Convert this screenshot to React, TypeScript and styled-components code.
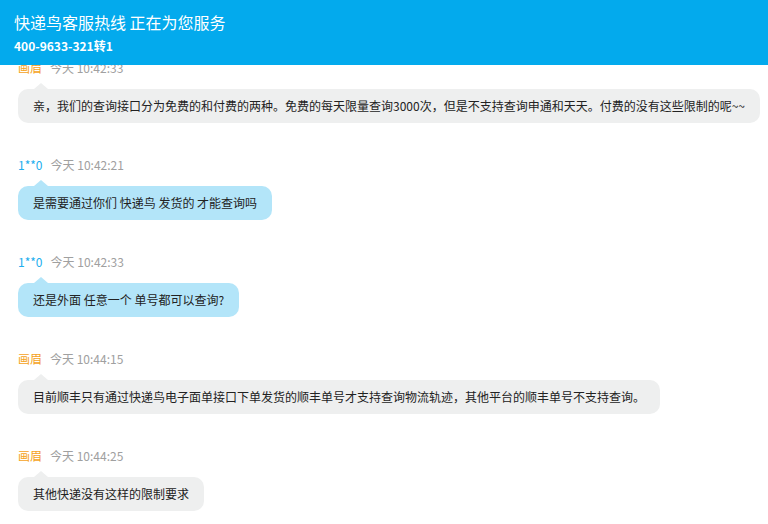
import styled, { createGlobalStyle } from "styled-components";

const GlobalStyle = createGlobalStyle`
  html, body {
    margin: 0;
    padding: 0;
    background: #fff;
    font-family: "Microsoft YaHei", "Noto Sans CJK SC", "Liberation Sans", sans-serif;
  }
`;

/**
 * top hotline bar, stays over the chat list
 */
const Header = styled.div`
  position: fixed;
  top: 0;
  left: 0;
  right: 0;
  height: 65px;
  box-sizing: border-box;
  padding: 10px 14px 0;
  background: #03aaed;
  color: #fff;
  z-index: 10;
`;

const HeaderTitle = styled.div`
  font-size: 16px;
  line-height: 24px;
`;

const HeaderPhone = styled.div`
  margin-top: 1px;
  font-size: 12px;
  font-weight: bold;
  line-height: 22px;
`;

const ChatList = styled.div`
  padding: 57px 0 0 18px;
`;

const Message = styled.div`
  margin-bottom: 31px;
`;

const Meta = styled.div`
  display: flex;
  gap: 8px;
  height: 20px;
  align-items: center;
  font-size: 12px;
`;

const Name = styled.span<{ $staff: boolean }>`
  color: ${(p) => (p.$staff ? "#f5a21b" : "#21aeee")};
`;

const Time = styled.span`
  color: #a0a0a0;
`;

const Bubble = styled.div<{ $staff: boolean }>`
  position: relative;
  display: inline-block;
  margin-top: 12px;
  padding: 9px 15px;
  border-radius: 10px;
  font-size: 12px;
  line-height: 16px;
  color: #222;
  background: ${(p) => (p.$staff ? "#eeefef" : "#b3e5f9")};
  &::before {
    content: "";
    position: absolute;
    top: -6px;
    left: 16px;
    border-left: 7px solid transparent;
    border-right: 7px solid transparent;
    border-bottom: 6px solid ${(p) => (p.$staff ? "#eeefef" : "#b3e5f9")};
  }
`;

type Msg = { name: string; staff: boolean; time: string; text: string };

const messages: Msg[] = [
  {
    name: "画眉",
    staff: true,
    time: "今天 10:42:33",
    text: "亲，我们的查询接口分为免费的和付费的两种。免费的每天限量查询3000次，但是不支持查询申通和天天。付费的没有这些限制的呢~~",
  },
  { name: "1**0", staff: false, time: "今天 10:42:21", text: "是需要通过你们 快递鸟 发货的 才能查询吗" },
  { name: "1**0", staff: false, time: "今天 10:42:33", text: "还是外面 任意一个 单号都可以查询?" },
  {
    name: "画眉",
    staff: true,
    time: "今天 10:44:15",
    text: "目前顺丰只有通过快递鸟电子面单接口下单发货的顺丰单号才支持查询物流轨迹，其他平台的顺丰单号不支持查询。",
  },
  { name: "画眉", staff: true, time: "今天 10:44:25", text: "其他快递没有这样的限制要求" },
];

const App = () => {
  return (
    <>
      <GlobalStyle />
      <Header>
        <HeaderTitle>快递鸟客服热线 正在为您服务</HeaderTitle>
        <HeaderPhone>400-9633-321转1</HeaderPhone>
      </Header>
      <ChatList>
        {messages.map((m, i) => (
          <Message key={`M-${i}`}>
            <Meta>
              <Name $staff={m.staff}>{m.name}</Name>
              <Time>{m.time}</Time>
            </Meta>
            <Bubble $staff={m.staff}>{m.text}</Bubble>
          </Message>
        ))}
      </ChatList>
    </>
  );
};

export default App;
